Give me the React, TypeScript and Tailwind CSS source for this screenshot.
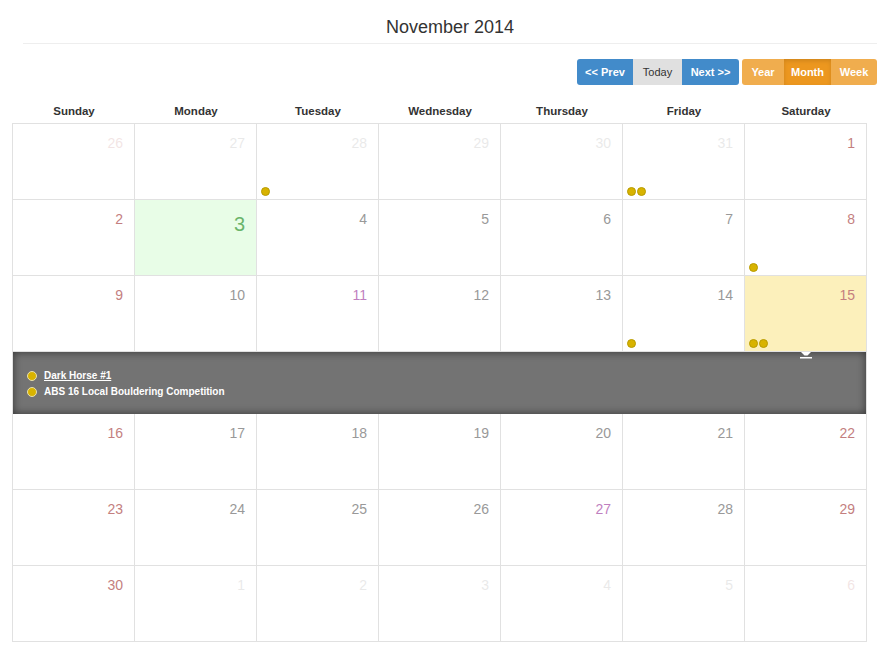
import React from "react";

type Day = {
  n: number;
  kind: "out" | "weekend" | "normal" | "holiday" | "today" | "outWeekend";
  dots?: number;
  selected?: boolean;
};

const weekdays = ["Sunday", "Monday", "Tuesday", "Wednesday", "Thursday", "Friday", "Saturday"];

const numClass: Record<Day["kind"], string> = {
  out: "text-[#333] opacity-10",
  outWeekend: "text-[#8b0000] opacity-10",
  weekend: "text-[#c47f7f]",
  normal: "text-[#999]",
  holiday: "text-[#bf7fbf]",
  today: "text-[#6ab46a] text-[20px] leading-[24px] pt-[1px]",
};

const wk = (start: number, kinds?: Partial<Record<number, Day>>): Day[] =>
  Array.from({ length: 7 }, (_, i) => {
    const n = start + i;
    const base: Day = { n, kind: i === 0 || i === 6 ? "weekend" : "normal" };
    return { ...base, ...(kinds?.[i] ?? {}) };
  });

const rowsTop: Day[][] = [
  [
    { n: 26, kind: "outWeekend" },
    { n: 27, kind: "out" },
    { n: 28, kind: "out", dots: 1 },
    { n: 29, kind: "out" },
    { n: 30, kind: "out" },
    { n: 31, kind: "out", dots: 2 },
    { n: 1, kind: "weekend" },
  ],
  wk(2, { 1: { n: 3, kind: "today" }, 6: { n: 8, kind: "weekend", dots: 1 } }),
  wk(9, { 2: { n: 11, kind: "holiday" }, 5: { n: 14, kind: "normal", dots: 1 }, 6: { n: 15, kind: "weekend", dots: 2, selected: true } }),
];

const rowsBottom: Day[][] = [
  wk(16),
  wk(23, { 4: { n: 27, kind: "holiday" } }),
  [
    { n: 30, kind: "weekend" },
    { n: 1, kind: "out" },
    { n: 2, kind: "out" },
    { n: 3, kind: "out" },
    { n: 4, kind: "out" },
    { n: 5, kind: "out" },
    { n: 6, kind: "outWeekend" },
  ],
];

const Dot = ({ big }: { big?: boolean }) => (
  <span
    className={`block shrink-0 rounded-full border border-[#b89b00] bg-[#d8b300] ${big ? "h-[10px] w-[10px] border-[#e8e0b0]" : "h-[9px] w-[9px]"}`}
  />
);

const Cell = ({ d }: { d: Day }) => {
  const bg = d.kind === "today" ? "bg-[#e8fde7]" : d.selected ? "bg-[#fcf0bb]" : "bg-white";
  return (
    <div className={`relative flex h-[76px] flex-col border-b border-r border-[#e1e1e1] ${bg}`}>
      <div className="flex justify-end pr-[11px] pt-[11px]">
        <span className={`text-[14px] leading-[16px] ${numClass[d.kind]}`}>{d.n}</span>
      </div>
      {d.dots ? (
        <div className="mt-auto flex gap-[1px] pb-[3px] pl-[4px]">
          {Array.from({ length: d.dots }, (_, i) => (
            <Dot key={i} />
          ))}
        </div>
      ) : null}
    </div>
  );
};

export default function App() {
  return (
    <div className="h-[656px] w-[887px] bg-white font-['Liberation_Sans',Arial,sans-serif] text-[#333]">
      <div className="ml-[23px] mr-[10px] border-b border-[#eee] pb-[6px] pt-[17px]">
        <h3 className="text-center text-[18px] leading-[20px]">November 2014</h3>
      </div>

      <div className="mr-[10px] mt-[15px] flex justify-end gap-[3px]">
        <div className="flex text-[11px] leading-[26px]">
          <button className="w-[56px] rounded-l-[3px] bg-[#428bca] font-bold text-white">&lt;&lt; Prev</button>
          <button className="w-[49px] bg-[#e0e0e0] text-[#333]">Today</button>
          <button className="w-[57px] rounded-r-[3px] bg-[#428bca] font-bold text-white">Next &gt;&gt;</button>
        </div>
        <div className="flex text-[11px] font-bold leading-[26px] text-white">
          <button className="w-[42px] rounded-l-[3px] bg-[#f0ad4e]">Year</button>
          <button className="w-[47px] bg-[#ec971f] shadow-[inset_0_2px_4px_rgba(0,0,0,0.12)]">Month</button>
          <button className="w-[46px] rounded-r-[3px] bg-[#f0ad4e]">Week</button>
        </div>
      </div>

      <div className="ml-[12px] mt-[15px] w-[855px]">
        <div className="grid grid-cols-7 pl-[1px]">
          {weekdays.map((w) => (
            <div key={w} className="text-center text-[11.5px] font-bold leading-[23px]">
              {w}
            </div>
          ))}
        </div>
        <div className="grid grid-cols-7 border-l border-t border-[#e1e1e1]">
          {rowsTop.flat().map((d, i) => (
            <Cell key={`t${i}`} d={d} />
          ))}
          <div className="relative col-span-7 h-[62px] border-r border-[#e1e1e1] bg-[#737373] shadow-[inset_0_0_8px_rgba(0,0,0,0.55)]">
            <svg className="absolute left-[786px] top-0" width="14" height="7" viewBox="0 0 14 7">
              <path d="M2 0 H12 L8.5 3.5 H5.5 Z" fill="#fff" />
              <rect x="1" y="5" width="12" height="1.5" fill="#fff" />
            </svg>
            <ul className="pl-[14px] pt-[16px] text-[10px] font-bold leading-[16px] text-white">
              <li className="flex items-center gap-[7px]">
                <Dot big />
                <span className="underline">Dark Horse #1</span>
              </li>
              <li className="flex items-center gap-[7px]">
                <Dot big />
                <span>ABS 16 Local Bouldering Competition</span>
              </li>
            </ul>
          </div>
          {rowsBottom.flat().map((d, i) => (
            <Cell key={`b${i}`} d={d} />
          ))}
        </div>
      </div>
    </div>
  );
}
